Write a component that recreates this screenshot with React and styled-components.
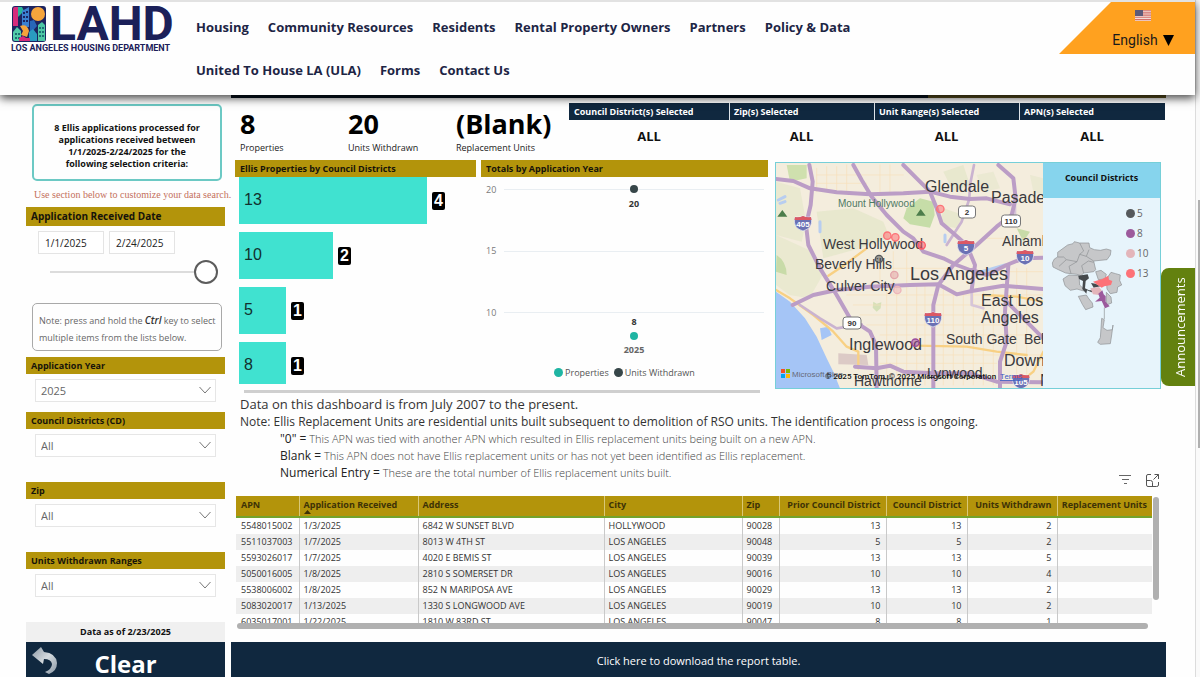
import React from "react";
import styled, { createGlobalStyle, css } from "styled-components";

const gold = "#b3940b";
const navy = "#10283f";
const teal = "#40e2d0";
const ui = `"Open Sans", "Noto Sans", sans-serif`;

const GlobalStyle = createGlobalStyle`
  *, *::before, *::after { box-sizing: border-box; }
  body { margin: 0; background: #fefefe; font-family: ${ui}; color: #111; }
  button, input, select { font-family: inherit; margin: 0; }
  p, h2, dl, dd, dt, ul, ol { margin: 0; padding: 0; }
`;

/* ---------- page frame ---------- */

const Page = styled.div`
  display: grid;
  grid-template-columns: minmax(0, 1fr) 5px;
  height: 100vh;
  overflow: hidden;
`;

const Content = styled.div`
  min-width: 0;
`;

const Rail = styled.div`
  border-left: 1px solid #dcdcdc;
  background: #fafafa;
  padding-top: 200px;
  display: flex;
  justify-content: flex-end;
`;

const RailThumb = styled.div`
  width: 2px;
  height: 248px;
  background: #b0b0b0;
`;

/* ---------- header ---------- */

const Header = styled.header`
  position: relative;
  z-index: 2;
  display: flex;
  align-items: flex-start;
  min-height: 95px;
  background: #fefefe;
  border-top: 2px solid #e2e2e2;
  box-shadow: 0 3px 9px rgba(0, 0, 0, 0.75);
`;

const Brand = styled.a`
  display: grid;
  grid-template-columns: 35px 1fr;
  column-gap: 4px;
  width: 164px;
  margin: 4px 21px 0 11px;
  color: #1b2059;
  text-decoration: none;
  font-family: Roboto, sans-serif;
`;

const BrandName = styled.span`
  font-size: 48px;
  line-height: 36px;
  font-weight: 700;
`;

const BrandCaption = styled.span`
  grid-column: 1 / -1;
  font-size: 9px;
  line-height: 11px;
  font-weight: 700;
  margin-top: 1px;
  white-space: nowrap;
`;

const Nav = styled.nav`
  flex: 1;
  max-width: 720px;
  display: flex;
  flex-wrap: wrap;
  column-gap: 19px;
  padding-top: 4px;
`;

const NavLink = styled.a`
  color: #1d2545;
  font-size: 13px;
  line-height: 43px;
  font-weight: 700;
  text-decoration: none;
  white-space: nowrap;
`;

const Language = styled.div`
  margin-left: auto;
  width: 136px;
  height: 52px;
  background: #ffa11f;
  clip-path: polygon(52px 0, 100% 0, 100% 100%, 0 100%);
  display: flex;
  flex-direction: column;
  align-items: center;
  padding: 8px 0 0 32px;
  gap: 10px;
`;

const LanguageButton = styled.button`
  display: flex;
  align-items: center;
  gap: 5px;
  padding: 0;
  border: 0;
  background: none;
  color: #1a1a1a;
  font-family: Roboto, sans-serif;
  font-size: 14px;
  line-height: 18px;
`;

/* ---------- columns ---------- */

const Columns = styled.div`
  display: grid;
  grid-template-columns: 199px minmax(0, 1fr);
  column-gap: 6px;
  padding: 0 29px 0 26px;
`;

const Sidebar = styled.aside`
  padding-top: 9px;
`;

const Summary = styled.p`
  margin: 0 3px 0 6px !important;
  height: 77px;
  border: 2px solid #6cc9c4;
  border-radius: 5px;
  display: flex;
  align-items: center;
  justify-content: center;
  text-align: center;
  padding: 6px 18px 0 !important;
  font-size: 9px;
  line-height: 12px;
  font-weight: 700;
`;

const Hint = styled.p`
  padding: 7px 0 5px 8px !important;
  font-family: "Liberation Serif", serif;
  font-size: 10px;
  line-height: 14px;
  color: #c4705c;
  white-space: nowrap;
`;

const headingBar = css`
  display: block;
  background: ${gold};
  color: #16130a;
  font-weight: 700;
  font-size: 9px;
  line-height: 17px;
  padding: 0 5px;
  white-space: nowrap;
`;

const DateHeading = styled.h2`
  ${headingBar}
  font-size: 10px;
  line-height: 19px;
`;

const DateRow = styled.div`
  display: flex;
  gap: 5px;
  padding: 5px 12px 0;
`;

const DateInput = styled.input`
  width: 66px;
  height: 23px;
  border: 1px solid #e4e4e4;
  background: #fff;
  padding: 0 6px;
  font-size: 10px;
  color: #222;
`;

const Slider = styled.input`
  appearance: none;
  display: block;
  width: 168px;
  height: 24px;
  margin: 6px 0 0 24px;
  background: linear-gradient(#dcdcdc, #dcdcdc) center / 100% 2px no-repeat;

  &::-webkit-slider-thumb {
    appearance: none;
    width: 24px;
    height: 24px;
    border: 2px solid #5c5c5c;
    border-radius: 50%;
    background: #fff;
  }
`;

const Note = styled.p`
  margin: 19px 3px 6px 6px !important;
  height: 48px;
  border: 1px solid #a9a9a9;
  border-radius: 5px;
  padding: 8px 6px 0 !important;
  font-size: 9px;
  line-height: 17px;
  color: #666;
  white-space: nowrap;

  em { font-size: 10px; font-weight: 600; color: #333; }
`;

const Field = styled.div`
  margin-bottom: ${(p) => (p.$tight ? 10 : 25)}px;
`;

const FieldLabel = styled.label`
  ${headingBar}
`;

const SelectBox = styled.div`
  position: relative;
  margin: 5px 9px 0;

  svg {
    position: absolute;
    right: 5px;
    top: 7px;
    pointer-events: none;
  }
`;

const Select = styled.select`
  appearance: none;
  width: 100%;
  height: 23px;
  display: block;
  border: 1px solid #e6e6e6;
  border-radius: 0;
  background: #fff;
  padding: 0 5px;
  font-size: 11px;
  color: #666;
`;

const AsOf = styled.p`
  background: #f0f0f0;
  font-size: 9px;
  font-weight: 700;
  line-height: 20px;
  text-align: center;
`;

const ClearButton = styled.button`
  position: relative;
  display: block;
  width: 100%;
  height: 44px;
  border: 0;
  background: ${navy};
  color: #fff;
  font-size: 24px;
  font-weight: 700;
  line-height: 44px;
  padding: 0;

  svg { position: absolute; left: 5px; top: 5px; }
`;

/* ---------- main column ---------- */

const Main = styled.main`
  min-width: 0;
`;

const TopStrip = styled.div`
  height: 3px;
  background: linear-gradient(90deg, #06121f 697px, #5f5320 697px);
`;

const StatsRow = styled.div`
  display: flex;
  height: 62px;
  padding: 5px 1px 0 9px;
`;

const Stat = styled.div`
  width: 108px;
  padding-top: 3px;
  white-space: nowrap;

  &:nth-child(3) { width: 113px; }
`;

const StatValue = styled.div`
  font-size: 27px;
  line-height: 36px;
  font-weight: 700;
  color: #000;
`;

const StatLabel = styled.div`
  font-size: 9px;
  line-height: 12px;
  color: #222;
`;

const Selections = styled.dl`
  flex: 1;
  display: grid;
  grid-template-columns: 160fr 145fr 145fr 146fr;
`;

const Selection = styled.div`
  text-align: center;

  dt {
    background: ${navy};
    color: #fff;
    text-align: left;
    padding-left: 5px;
    font-size: 9px;
    font-weight: 700;
    line-height: 17px;
    white-space: nowrap;
  }

  & + & dt { border-left: 1px solid #dfe5ea; padding-left: 4px; }

  dd {
    font-size: 13px;
    font-weight: 700;
    line-height: 32px;
  }
`;

const VisualRow = styled.div`
  display: grid;
  grid-template-columns: 533fr 386fr;
  column-gap: 7px;
  padding: 0 5px 0 4px;
`;

const Panels = styled.div`
  display: grid;
  grid-template-columns: 241fr 287fr;
  column-gap: 5px;
`;

const PanelHeading = styled.h2`
  ${headingBar}
`;

const Panel = styled.section`
  height: 226px;
  overflow: hidden;
`;

const PanelScroll = styled.div`
  grid-column: 1 / -1;
  height: 3px;
  margin: 4px 8px 0 9px;
  background: #cfcfcf;
`;

const Bars = styled.div`
  height: 207px;
  overflow: hidden;
  padding-left: 4px;
  display: flex;
  flex-direction: column;
  gap: 8px;
`;

const BarRow = styled.div`
  flex: none;
  display: flex;
  align-items: center;
  gap: 5px;
  font-family: "Liberation Sans", sans-serif;
  font-size: 16px;
`;

const Bar = styled.div`
  height: 47px;
  line-height: 46px;
  background: ${teal};
  color: #12302e;
  padding-left: 5px;
`;

const BarValue = styled.span`
  width: 13px;
  line-height: 18px;
  border-radius: 2px;
  background: #000;
  color: #fff;
  font-weight: 700;
  text-align: center;
`;

const LineChart = styled.svg`
  display: block;
  width: 100%;
  height: 187px;
  font-family: ${ui};
`;

const Legend = styled.ul`
  display: flex;
  justify-content: center;
  gap: 5px;
  list-style: none;
  font-size: 9px;
  line-height: 17px;
  color: #555;
`;

const LegendItem = styled.li`
  display: flex;
  align-items: center;
  gap: 2px;
`;

const Dot = styled.span`
  width: 9px;
  height: 9px;
  border-radius: 50%;
  background: ${(p) => p.$color};
`;

const MapCard = styled.section`
  display: grid;
  grid-template-columns: 267fr 117fr;
  margin-top: 2px;
  height: 227px;
  border: 1px solid #76cfd8;
`;

const CityMap = styled.svg`
  display: block;
  width: 100%;
  height: 225px;
  background: #f4eddd;
  font-family: "Liberation Sans", sans-serif;
`;

const Districts = styled.div`
  background: #e7f4fb;
  min-width: 0;
`;

const DistrictsHeading = styled.h2`
  background: #86d4ed;
  font-size: 9px;
  font-weight: 700;
  line-height: 29px;
  height: 35px;
  text-align: center;
`;

const DistrictsBody = styled.div`
  display: flex;
  gap: 3px;
  padding: 5px 0 0 8px;

  > svg { flex: none; margin-top: 37px; }
`;

const DistrictList = styled.ul`
  list-style: none;
  font-size: 10px;
  line-height: 20px;
  color: #666;
`;

/* ---------- notes and table ---------- */

const NotesRow = styled.div`
  display: flex;
  justify-content: space-between;
  align-items: flex-end;
  height: 91px;
  margin: 3px 7px 9px 9px;
`;

const Notes = styled.div`
  align-self: flex-start;
  font-size: 12px;
  line-height: 17px;
  color: #333;
  white-space: nowrap;
`;

const Lead = styled.p`
  font-size: 13px;
`;

const Definition = styled.p`
  padding-left: 40px !important;
  font-size: 11px;
  font-weight: 300;
  color: #444;

  b { font-size: 12px; font-weight: 500; color: #222; }
`;

const Tools = styled.div`
  display: flex;
  gap: 14px;
`;

const ToolButton = styled.button`
  display: block;
  padding: 0;
  border: 0;
  background: none;
  width: 13px;
  height: 13px;

  svg { display: block; }
`;

const TableArea = styled.div`
  display: grid;
  grid-template-columns: minmax(0, 1fr) 8px;
  margin: 0 6px 13px 5px;
`;

const TableClip = styled.div`
  height: 127px;
  overflow: hidden;
`;

const Table = styled.table`
  width: 100%;
  table-layout: fixed;
  border-collapse: collapse;
  font-size: 9px;
  color: #333;

  th, td {
    padding: 0 4px;
    text-align: left;
    white-space: nowrap;
    border-left: 1px solid #c9c9c9;
  }
  th:first-child, td:first-child { border-left: 0; padding-left: 5px; }
  th:nth-child(n + 6), td:nth-child(n + 6) { text-align: right; padding: 0 5px 0 0; }

  th {
    height: 21px;
    line-height: 17px;
    vertical-align: top;
    font-weight: 700;
    background: ${gold};
    color: #3d3206;
    border-bottom: 2px solid #73a32c;
    border-left-color: #d9c878;
  }
  th svg { display: block; margin-top: -3px; }
  td { height: 16px; line-height: 16px; }
  tbody tr:nth-child(even) { background: #eeeeee; }
`;

const VScroll = styled.div`
  width: 6px;
  height: 103px;
  margin: 1px 0 0 1px;
  border-radius: 3px;
  background: #b0b0b0;
`;

const HScroll = styled.div`
  height: 6px;
  margin: 0 4px 0 1px;
  border-radius: 3px;
  background: #b0b0b0;
`;

const Download = styled.a`
  display: block;
  height: 44px;
  background: ${navy};
  color: #fff;
  font-size: 11px;
  line-height: 38px;
  text-align: center;
  text-decoration: none;
`;

const Announcements = styled.button`
  position: fixed;
  z-index: 3;
  right: 5px;
  top: 268px;
  width: 34px;
  height: 118px;
  border: 0;
  border-radius: 0 8px 8px 0;
  background: #63810f;
  color: #fff;
  padding: 0 5px 0 0;
  font-size: 13px;
  writing-mode: vertical-rl;
  transform: rotate(180deg);
`;

/* ---------- data ---------- */

const navItems = [
  "Housing", "Community Resources", "Residents", "Rental Property Owners", "Partners",
  "Policy & Data", "United To House LA (ULA)", "Forms", "Contact Us",
];

const stats = [["8", "Properties"], ["20", "Units Withdrawn"], ["(Blank)", "Replacement Units"]];

const selections = ["Council District(s) Selected", "Zip(s) Selected", "Unit Range(s) Selected", "APN(s) Selected"];

const fields = [
  { id: "year", label: "Application Year", value: "2025", tight: true },
  { id: "cd", label: "Council Districts (CD)", value: "All" },
  { id: "zip", label: "Zip", value: "All" },
  { id: "ranges", label: "Units Withdrawn Ranges", value: "All" },
];

const bars = [[13, 4], [10, 2], [5, 1], [8, 1]];

const districts = [["5", "#55595c"], ["8", "#9c5a9c"], ["10", "#e3b5ba"], ["13", "#fd7277"]];

const headers = [
  "APN", "Application Received", "Address", "City", "Zip",
  "Prior Council District", "Council District", "Units Withdrawn", "Replacement Units",
];
const colWidths = [63, 119, null, 138, 37, 107, 81, 90, 95];

const rows = [
  ["5548015002", "1/3/2025", "6842 W SUNSET BLVD", "HOLLYWOOD", "90028", 13, 13, 2, ""],
  ["5511037003", "1/7/2025", "8013 W 4TH ST", "LOS ANGELES", "90048", 5, 5, 2, ""],
  ["5593026017", "1/7/2025", "4020 E BEMIS ST", "LOS ANGELES", "90039", 13, 13, 5, ""],
  ["5050016005", "1/8/2025", "2810 S SOMERSET DR", "LOS ANGELES", "90016", 10, 10, 4, ""],
  ["5538006002", "1/8/2025", "852 N MARIPOSA AVE", "LOS ANGELES", "90029", 13, 13, 2, ""],
  ["5083020017", "1/13/2025", "1330 S LONGWOOD AVE", "LOS ANGELES", "90019", 10, 10, 2, ""],
  ["6035017001", "1/22/2025", "1810 W 83RD ST", "LOS ANGELES", "90047", 8, 8, 1, ""],
];

/* ---------- drawings ---------- */

const LogoMark = () => (
  <svg width="35" height="36" viewBox="0 0 35 36" aria-hidden="true">
    <rect x="1" y="0" width="34" height="36" rx="3" fill="#1c2460" />
    <path d="M2 3q0-2 2-2h3v19H2z" fill="#d62b7c" />
    <path d="M7 1l4 0 2 4-6 6z" fill="#2bb59b" />
    <path d="M11 5l7-4v20h-7z" fill="#3a7fd0" />
    <path d="M12 6h2v2h-2zM15 5h2v2h-2zM12 10h2v2h-2zM15 10h2v2h-2zM12 14h2v2h-2zM15 14h2v2h-2z" fill="#1c2460" />
    <circle cx="27" cy="8" r="7" fill="#f6a53c" />
    <path d="M19 15l4-1 3 6-7 8z" fill="#2867b8" />
    <path d="M27 19l4-3 3 3v16h-7z" fill="#4cc7a4" />
    <path d="M28 21h2v2h-2zM31 21h2v2h-2zM28 25h2v2h-2zM31 25h2v2h-2zM28 29h2v2h-2zM31 29h2v2h-2z" fill="#1c6f74" />
    <path d="M2 26l4-5 4 4v10H4q-2 0-2-2z" fill="#52cba9" />
    <path d="M4 27h2v2H4zM7 27h2v2H7zM4 31h2v2H4zM7 31h2v2H7z" fill="#1c6f74" />
    <path d="M9 20q7-3 9 5l-2 6-6-2 2-4z" fill="#f5a43b" />
    <path d="M8 32l4-2 3 2v3H8z" fill="#d62b7c" />
    <path d="M18 26l4-3 4 5v7h-8z" fill="#2a9bc0" />
    <path d="M15 32h4v3h-4z" fill="#d62b7c" />
  </svg>
);

const Flag = () => (
  <svg width="16" height="11" viewBox="0 0 16 11" aria-hidden="true">
    <rect width="16" height="11" fill="#f3dfd8" />
    <path d="M0 .7h16M0 2.9h16M0 5.1h16M0 7.3h16M0 9.6h16" stroke="#d2706b" strokeWidth="1.1" />
    <rect width="8" height="6" fill="#5c5a78" />
  </svg>
);

const Chevron = () => (
  <svg width="12" height="8" viewBox="0 0 12 8" fill="none" stroke="#777" aria-hidden="true">
    <path d="M0.5 1L6 7l5.5-6" />
  </svg>
);

const Undo = () => (
  <svg width="28" height="30" viewBox="0 0 28 30" aria-hidden="true">
    <defs>
      <linearGradient id="undo" x1="0" y1="0" x2="1" y2="1">
        <stop offset="0" stopColor="#8d99a5" />
        <stop offset=".5" stopColor="#d4dade" />
        <stop offset="1" stopColor="#8896a4" />
      </linearGradient>
    </defs>
    <path d="M1 8L10 0l3 5q12 1 13 11 0 8-8 11l-4-2q7-3 7-8-1-5-8-5l-1 5z" fill="url(#undo)" />
  </svg>
);

const Shield = ({ x, y, n }) => (
  <g transform={`translate(${x} ${y})`}>
    <path d="M-8-6q4 1 8-1 4 2 8 1Q11 5 0 8-11 5-8-6z" fill="#6a71b4" stroke="#fff" strokeWidth=".6" />
    <path d="M-8-6q4 1 8-1 4 2 8 1l.5 3h-17z" fill="#dc5864" />
    <text y="4" textAnchor="middle" fontSize="8" fontWeight="700" fill="#fff">{n}</text>
  </g>
);

const RoadSign = ({ x, y, w, n }) => (
  <g transform={`translate(${x} ${y})`}>
    <rect x={-w / 2} y="-6" width={w} height="12" rx="3" fill="#fff" stroke="#777" />
    <text y="3" textAnchor="middle" fontSize="8" fontWeight="700" fill="#333">{n}</text>
  </g>
);

const places = [
  ["Glendale", 149, 29, 16], ["Pasadena", 215, 40, 16], ["West Hollywood", 47, 86, 14],
  ["Beverly Hills", 39, 106, 14], ["Los Angeles", 134, 117, 18], ["Culver City", 50, 128, 14],
  ["Alhambra", 226, 83, 14], ["East Los", 205, 143, 16], ["Angeles", 205, 160, 16],
  ["Inglewood", 73, 187, 16], ["South Gate", 170, 181, 14], ["Bell", 248, 181, 14],
  ["Downey", 228, 203, 16], ["Lynwood", 151, 215, 14], ["Hawthorne", 78, 223, 14], ["Norwalk", 264, 223, 16],
];

const pins = [
  [511, 162, "#fd7277"], [352, 242, "#fd7277"], [376, 247, "#fd7277"], [455, 271, "#fd5b66"],
  [327, 312, "#55595c"], [373, 360, "#e3a5aa"], [382, 405, "#ecb5ba"], [436, 563, "#9c4a9c"],
];

const LosAngelesMap = () => (
  <CityMap viewBox="0 0 267 225" preserveAspectRatio="xMidYMid slice" role="img" aria-label="Map of Los Angeles">
    <g transform="scale(.33333) translate(-18 -24)" fill="none" strokeLinecap="round" strokeLinejoin="round">
      <g fill="#e2e6c8">
        <path d="M18 80L90 100 108 200 95 260 18 240z" opacity=".6" />
        <path d="M50 30h60v40l-50 10z" fill="#cfe0ae" />
        <path d="M140 170l110-10 90 40 20 50-90 30-110 30z" opacity=".7" />
        <path d="M18 240l110 50 30 70-40 70-60-10-40-30z" opacity=".6" />
        <path d="M410 160l40-30 40 10 4 40-14 38-60-10-20-18z" fill="#c6dda8" />
        <path d="M520 50l60-20 20 60-50 20z" opacity=".7" />
        <path d="M520 160l60 20-20 40-50-10z" opacity=".7" />
        <path d="M20 300q30 20 30 60l-32-10zM740 220l40 10-20 30z" fill="#c8dba8" />
        <path d="M310 440l10 6 14-4-2 18-12 10-12-12z" fill="#d5e0b8" />
        <path d="M620 60l50-10 20 50-50 10zM780 60l40 10v50l-30-10z" opacity=".5" />
      </g>
      <g stroke="#f8e0ba" strokeWidth="2">
        <path d="M140 60H400M140 40V110M170 35V110M200 35V115M230 30V115M330 30V115M360 30V110M140 85H290" />
        <path d="M230 420H820M250 450H700M270 480H700M290 510H700M330 540H820M330 600H820M330 625H680" />
        <path d="M350 400V690M380 395V690M410 395V690M440 390V690M465 390V690M520 400V690M550 420V690M580 420V690M610 410V690M640 410V690M670 400V690" />
        <path d="M330 300V400M370 290V390M410 290V390M300 340H540M640 250H820M640 350H820M740 340V690M770 340V690" />
      </g>
      <path d="M18 410L60 440 105 490 140 545 170 610 190 650 210 700H18z" fill="#a5c5f6" />
      <path d="M150 520l25-5 10 25-30 15z" fill="#a5c5f6" />
      <path d="M205 595l85 5 5 30-90-2z" fill="#dccac6" />
      <path d="M25 135l20-10M150 200v30M525 240v20M635 350l70-20M30 145l15-5" stroke="#b7cdf0" strokeWidth="9" />
      <g stroke="#f8d083" strokeWidth="7">
        <path d="M175 362L220 332 290 280" />
        <path d="M18 405L60 430 130 480 190 530 230 575 265 590V640" />
        <path d="M440 572L590 575 680 590 770 600" />
        <path d="M640 420L740 425 820 440M820 590L790 650 740 690" />
      </g>
      <g stroke="#cab3d0" strokeWidth="8">
        <path d="M90 450L150 490 200 520 275 508" />
        <path d="M612 30L600 90 598 132 575 200 530 270" />
        <path d="M735 150V185M605 410V450L640 460" stroke="#d6c5d8" />
      </g>
      <g stroke="#bb9dc6" strokeWidth="12">
        <path d="M118 30L128 80 122 150 108 210 115 270 150 340 200 420 240 490 300 530 318 570 320 700" />
        <path d="M18 72L70 78 120 100 200 112 300 118 400 115 480 110 540 125 600 132 650 130 720 148" />
        <path d="M250 30L275 75 305 125 350 180 400 230 430 250 460 290 520 310 560 330 600 345" />
        <path d="M400 30L440 70 480 110 500 160 515 205 550 235 590 270 615 330 605 405" />
        <path d="M685 30L730 70 737 130 725 180 680 215 620 270 550 330 505 390 490 450V700" />
        <path d="M68 450L130 420 200 405 300 395 420 390 505 388 560 418 605 408 700 392 820 402" />
        <path d="M605 345L650 360 710 330 760 310 820 308" />
        <path d="M255 635L320 640 360 632 400 650 490 655 600 655 680 680 820 682" />
        <path d="M715 330L710 400 705 470 710 560 690 620V700M710 440L760 490 820 550" />
      </g>
      <path d="M22 185l15-20 15 20zM438 182l14-20 15 20z" fill="#4c7d4b" />
    </g>
    <text x="62" y="44" fontSize="10" fill="#4f7a63">Mount Hollywood</text>
    <g fill="#3a3a3e">
      {places.map(([name, x, y, size]) => (
        <text key={name + y} x={x} y={y} fontSize={size}>{name}</text>
      ))}
    </g>
    <Shield x={27} y={60} n="405" />
    <Shield x={190} y={84} n="5" />
    <Shield x={249} y={94} n="10" />
    <Shield x={157} y={156} n="110" />
    <Shield x={245} y={218} n="105" />
    <RoadSign x={191} y={49} w={17} n="2" />
    <RoadSign x={235} y={58} w={19} n="110" />
    <RoadSign x={76} y={160} w={18} n="90" />
    <g transform="scale(.33333) translate(-18 -24)">
      {pins.map(([x, y, color]) => (
        <circle key={`${x}-${y}`} cx={x} cy={y} r="11" fill={color} fillOpacity=".55" stroke={color} strokeWidth="4" />
      ))}
    </g>
    <path d="M5 206h4v4H5z" fill="#f25022" />
    <path d="M10 206h4v4h-4z" fill="#7fba00" />
    <path d="M5 211h4v4H5z" fill="#00a4ef" />
    <path d="M10 211h4v4h-4z" fill="#ffb900" />
    <text x="16" y="214" fontSize="8" fill="#666a78">Microsoft Bing</text>
    <g fontFamily="Roboto, sans-serif" fontSize="8">
      <text x="49" y="216" fontWeight="500" fill="#111">© 2025 TomTom, © 2025 Microsoft Corporation</text>
      <a href="#terms"><text x="224" y="216" fill="#3c5fc4" textDecoration="underline">Terms</text></a>
    </g>
  </CityMap>
);

const DistrictShapes = () => (
  <svg width="72" height="107" viewBox="62 255 216 321" role="img" aria-label="Council district boundaries">
    <g fill="#c6c7c9" stroke="#8d9093" strokeWidth="2" strokeLinejoin="round">
      <path d="M82 292L112 270 128 266 132 260 148 264 176 264 178 278 192 284 210 286 228 282 242 286 240 300 230 314 190 318 196 344 190 350 160 354 152 362 140 358 122 356 106 354 84 344 68 336 66 324 72 312 82 306z" />
      <path d="M82 306h18l8 8 32 6 8-22 12-10-12-24M108 314l-22 20M122 356l-6-22 24-14M148 298l20 6 8-20M168 304l22 14M160 354l-6-22 20-14 16 4" fill="none" />
      <path d="M98 372L116 360 146 362 148 390 158 400 160 408 140 402 120 406 104 392z" />
      <path d="M144 424L168 420 176 432 186 444 188 456 166 464 156 448z" />
      <path d="M196 350l16-4 16 12-4 14-20 2zM228 372l14-20 14 4 14 4-2 16 6 14-12 6-2 16-20 4-10-14z" />
      <path d="M228 412l14 14 2 18-16 6z" />
      <path d="M222 458v34M214 490l8 4-4 24 12 8 16-2 2-14-4 30-4 26-30 2-8-6 8-14 2-28z" />
    </g>
    <path d="M144 362l28-4 4 12-10 8-2 22 12 6 18 0-10 6-14-6-2 10-12-14 2-24-12-6z" fill="#45494c" />
    <path d="M182 384l14 2 14 8-20 4z" fill="#45494c" />
    <path d="M188 380l28-8 18-10 2 12 10 4-4 12-20 4-8 4-12-8z" fill="#fd7277" />
    <path d="M180 400l26-4 8 10-8 14-18-2z" fill="#e3b5ba" />
    <path d="M204 416l12-10 4 12 6 6 0 16 12 14-14 6-10-22-20 2 14-12z" fill="#9c5a9c" />
  </svg>
);

const FilterIcon = () => (
  <svg width="13" height="13" viewBox="0 0 13 13" stroke="#666" aria-hidden="true">
    <path d="M0 1.5h12M3 5.5h7M5 9.5h3" />
  </svg>
);

const FocusIcon = () => (
  <svg width="13" height="13" viewBox="0 0 13 13" fill="none" stroke="#555" aria-hidden="true">
    <path d="M5 .5H2Q.5 .5 .5 2v9q0 1.500 1.500 1.500h8.500q2 0 2-1.500V8M8.500 .5h4V5M12.500 .5L7.500 5.500M.5 6.500h4q2 0 2 2v4" />
  </svg>
);

/* ---------- page ---------- */

export default function App() {
  return (
    <Page>
      <GlobalStyle />
      <Content>
        <Header>
          <Brand href="#home">
            <LogoMark />
            <BrandName>LAHD</BrandName>
            <BrandCaption>LOS ANGELES HOUSING DEPARTMENT</BrandCaption>
          </Brand>
          <Nav>
            {navItems.map((item) => <NavLink key={item} href="#nav">{item}</NavLink>)}
          </Nav>
          <Language>
            <Flag />
            <LanguageButton type="button">
              English
              <svg width="11" height="11" viewBox="0 0 11 11" aria-hidden="true"><path d="M0 0h11L5.500 11z" fill="#000" /></svg>
            </LanguageButton>
          </Language>
        </Header>

        <Columns>
          <Sidebar>
            <Summary>8 Ellis applications processed for applications received between 1/1/2025-2/24/2025 for the following selection criteria:</Summary>
            <Hint>Use section below to customize your data search.</Hint>
            <DateHeading>Application Received Date</DateHeading>
            <DateRow>
              <DateInput aria-label="Start date" defaultValue="1/1/2025" />
              <DateInput aria-label="End date" defaultValue="2/24/2025" />
            </DateRow>
            <Slider type="range" aria-label="Application received date" min="0" max="100" defaultValue="100" />
            <Note>Note: press and hold the <em>Ctrl</em> key to select<br />multiple items from the lists below.</Note>
            {fields.map((f) => (
              <Field key={f.id} $tight={f.tight}>
                <FieldLabel htmlFor={f.id}>{f.label}</FieldLabel>
                <SelectBox>
                  <Select id={f.id} defaultValue={f.value}><option>{f.value}</option></Select>
                  <Chevron />
                </SelectBox>
              </Field>
            ))}
            <AsOf>Data as of 2/23/2025</AsOf>
            <ClearButton type="button"><Undo />Clear</ClearButton>
          </Sidebar>

          <Main>
            <TopStrip />
            <StatsRow>
              {stats.map(([value, label]) => (
                <Stat key={label}>
                  <StatValue>{value}</StatValue>
                  <StatLabel>{label}</StatLabel>
                </Stat>
              ))}
              <Selections>
                {selections.map((s) => <Selection key={s}><dt>{s}</dt><dd>ALL</dd></Selection>)}
              </Selections>
            </StatsRow>

            <VisualRow>
              <Panels>
                <Panel>
                  <PanelHeading>Ellis Properties by Council Districts</PanelHeading>
                  <Bars>
                    {bars.map(([district, count]) => (
                      <BarRow key={district}>
                        <Bar style={{ width: `${count * 47}px` }}>{district}</Bar>
                        <BarValue>{count}</BarValue>
                      </BarRow>
                    ))}
                  </Bars>
                </Panel>
                <Panel>
                  <PanelHeading>Totals by Application Year</PanelHeading>
                  <LineChart viewBox="0 0 287 187" role="img" aria-label="Totals by application year">
                    <path d="M23 12.500H283M23 74.500H283M23 135.500H283" stroke="#e9eef2" />
                    <g fontSize="9" fill="#7a7a7a">
                      <text x="5" y="16">20</text>
                      <text x="5" y="77">15</text>
                      <text x="5" y="139">10</text>
                    </g>
                    <circle cx="153" cy="12" r="4" fill="#374649" />
                    <circle cx="153" cy="159" r="4" fill="#1fb5a3" />
                    <g fontSize="9" fontWeight="700" fill="#333" textAnchor="middle">
                      <text x="153" y="30">20</text>
                      <text x="153" y="148">8</text>
                      <text x="153" y="176" fill="#666">2025</text>
                    </g>
                  </LineChart>
                  <Legend>
                    <LegendItem><Dot $color="#1fb5a3" />Properties</LegendItem>
                    <LegendItem><Dot $color="#374649" />Units Withdrawn</LegendItem>
                  </Legend>
                </Panel>
                <PanelScroll />
              </Panels>
              <MapCard>
                <LosAngelesMap />
                <Districts>
                  <DistrictsHeading>Council Districts</DistrictsHeading>
                  <DistrictsBody>
                    <DistrictShapes />
                    <DistrictList>
                      {districts.map(([n, color]) => (
                        <LegendItem key={n}><Dot $color={color} />{n}</LegendItem>
                      ))}
                    </DistrictList>
                  </DistrictsBody>
                </Districts>
              </MapCard>
            </VisualRow>

            <NotesRow>
              <Notes>
                <Lead>Data on this dashboard is from July 2007 to the present.</Lead>
                <p>Note: Ellis Replacement Units are residential units built subsequent to demolition of RSO units. The identification process is ongoing.</p>
                <Definition><b>"0" =</b> This APN was tied with another APN which resulted in Ellis replacement units being built on a new APN.</Definition>
                <Definition><b>Blank =</b> This APN does not have Ellis replacement units or has not yet been identified as Ellis replacement.</Definition>
                <Definition><b>Numerical Entry =</b> These are the total number of Ellis replacement units built.</Definition>
              </Notes>
              <Tools>
                <ToolButton type="button" aria-label="Filters"><FilterIcon /></ToolButton>
                <ToolButton type="button" aria-label="Focus mode"><FocusIcon /></ToolButton>
              </Tools>
            </NotesRow>

            <TableArea>
              <TableClip>
                <Table>
                  <colgroup>
                    {colWidths.map((w, i) => <col key={i} width={w ?? undefined} />)}
                  </colgroup>
                  <thead>
                    <tr>
                      {headers.map((h, i) => (
                        <th key={h} scope="col">
                          {h}
                          {i === 1 && <svg width="7" height="4" viewBox="0 0 7 4" aria-hidden="true"><path d="M0 4l3.500-4L7 4z" fill="#3d3206" /></svg>}
                        </th>
                      ))}
                    </tr>
                  </thead>
                  <tbody>
                    {rows.map((r) => (
                      <tr key={r[0]}>{r.map((cell, i) => <td key={i}>{cell}</td>)}</tr>
                    ))}
                  </tbody>
                </Table>
              </TableClip>
              <VScroll />
              <HScroll />
            </TableArea>
            <Download href="#download">Click here to download the report table.</Download>
          </Main>
        </Columns>
      </Content>
      <Rail><RailThumb /></Rail>
      <Announcements type="button">Announcements</Announcements>
    </Page>
  );
}
